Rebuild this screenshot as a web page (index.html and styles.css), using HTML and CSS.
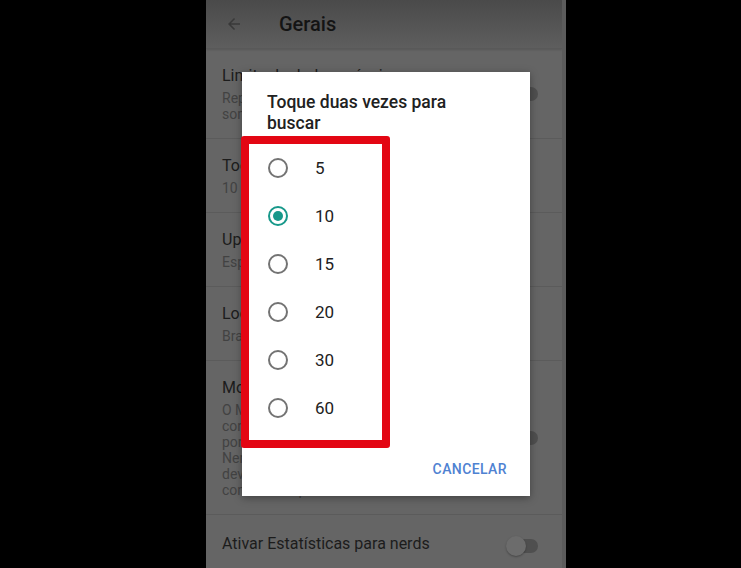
FILE: index.html
```html
<!DOCTYPE html>
<html>
  <head>
    <title>Gerais</title>
    <link rel="stylesheet" href="styles.css">
  </head>
  <body>
    <div class="screen">
      <div class="toolbar">
        <svg class="back" width="18" height="18" viewBox="0 0 24 24">
          <path d="M20 11H7.83l5.59-5.59L12 4l-8 8 8 8 1.41-1.41L7.83 13H20v-2z" fill="#333"/>
        </svg>
        <div class="toolbar-title">Gerais</div>
      </div>

      <div class="setting">
        <div class="setting-text">
          <div class="setting-title">Limite de dados móveis</div>
          <div class="setting-sub">Reproduzir vídeos em HD</div>
          <div class="setting-sub">somente em Wi-Fi</div>
        </div>
        <div class="toggle"><span class="thumb"></span></div>
      </div>
      <div class="setting">
        <div class="setting-text">
          <div class="setting-title">Tocar duas vezes para buscar</div>
          <div class="setting-sub">10 segundos</div>
        </div>
      </div>
      <div class="setting">
        <div class="setting-text">
          <div class="setting-title">Upload</div>
          <div class="setting-sub">Especificar preferências de rede</div>
        </div>
      </div>
      <div class="setting">
        <div class="setting-text">
          <div class="setting-title">Local</div>
          <div class="setting-sub">Brasil</div>
        </div>
      </div>
      <div class="setting">
        <div class="setting-text">
          <div class="setting-title">Modo restrito</div>
          <div class="setting-sub">O Modo restrito ajuda a ocultar</div>
          <div class="setting-sub">conteúdo potencialmente adulto</div>
          <div class="setting-sub">por meio de filtros.</div>
          <div class="setting-sub">Nenhum filtro é 100% preciso e</div>
          <div class="setting-sub">deve ser ativado em cada</div>
          <div class="setting-sub">conta ou dispositivo.</div>
        </div>
        <div class="toggle"><span class="thumb"></span></div>
      </div>
      <div class="setting single">
        <div class="setting-text">
          <div class="setting-title">Ativar Estatísticas para nerds</div>
        </div>
        <div class="toggle"><span class="thumb"></span></div>
      </div>

      <div class="dialog">
        <div class="dialog-title">Toque duas vezes para buscar</div>
        <div class="options">
          <div class="option"><span class="radio"></span><span class="label">5</span></div>
          <div class="option"><span class="radio checked"></span><span class="label">10</span></div>
          <div class="option"><span class="radio"></span><span class="label">15</span></div>
          <div class="option"><span class="radio"></span><span class="label">20</span></div>
          <div class="option"><span class="radio"></span><span class="label">30</span></div>
          <div class="option"><span class="radio"></span><span class="label">60</span></div>
        </div>
        <div class="dialog-actions">
          <span class="button">Cancelar</span>
        </div>
      </div>
    </div>
  </body>
</html>
```

FILE: styles.css
```css
body {
  margin: 0;
  background: #000000;
  font-family: Roboto, "Noto Sans", sans-serif;
  width: 741px;
  height: 568px;
  overflow: hidden;
}

.screen {
  position: relative;
  margin-left: 206px;
  width: 356px;
  height: 568px;
  background-color: #656565;
  border-right: 4px solid #5c5c5c;
  overflow: hidden;
}

.toolbar {
  display: flex;
  align-items: center;
  height: 48px;
  background: linear-gradient(to bottom, #4a4a4a, #5e5e5e);
  border-bottom: 1px solid #595959;
  box-shadow: 0 1px 2px rgba(0, 0, 0, 0.15);
}

.back {
  margin-left: 19px;
  opacity: 0.8;
}

.toolbar-title {
  margin-left: 36px;
  font-size: 20px;
  font-weight: 500;
  color: #141414;
}

.setting {
  display: flex;
  align-items: center;
  padding: 17px 24px 16px 16px;
  border-bottom: 1px solid #5b5b5b;
}

.setting-text {
  flex: 1;
}

.setting-title {
  font-size: 16px;
  line-height: 20px;
  color: #1c1c1c;
  margin-bottom: 4px;
}

.setting-sub {
  font-size: 14px;
  line-height: 16px;
  color: #424242;
}

.single {
  padding-top: 19px;
  padding-bottom: 15px;
}

.toggle {
  position: relative;
  width: 28px;
  height: 14px;
  border-radius: 7px;
  background-color: #4f4f4f;
}

.thumb {
  position: absolute;
  left: -4px;
  top: -3px;
  width: 20px;
  height: 20px;
  border-radius: 50%;
  background-color: #6c6c6c;
  box-shadow: 0 1px 2px rgba(0, 0, 0, 0.3);
}

.dialog {
  position: absolute;
  left: 36px;
  top: 72px;
  width: 288px;
  height: 424px;
  box-sizing: border-box;
  background-color: #ffffff;
  box-shadow: 0 2px 8px rgba(0, 0, 0, 0.35);
  padding-top: 20px;
  display: flex;
  flex-direction: column;
}

.dialog-title {
  padding: 0 0 0 25px;
  width: 200px;
  font-size: 17.5px;
  line-height: 21px;
  font-weight: 500;
  color: #212121;
}

.options {
  margin-top: 2px;
  margin-left: -1px;
  width: 133px;
  border: 8px solid #e30613;
  border-radius: 3px;
  padding-bottom: 8px;
}

.option {
  display: flex;
  align-items: center;
  height: 48px;
  padding-left: 19px;
}

.radio {
  width: 16px;
  height: 16px;
  border: 2px solid #737373;
  border-radius: 50%;
  box-sizing: content-box;
  position: relative;
}

.radio.checked {
  border-color: #17988a;
}

.radio.checked::after {
  content: "";
  position: absolute;
  left: 3px;
  top: 3px;
  width: 10px;
  height: 10px;
  border-radius: 50%;
  background-color: #17988a;
}

.label {
  margin-left: 27px;
  font-size: 17px;
  color: #212121;
}

.dialog-actions {
  display: flex;
  justify-content: flex-end;
  padding: 0 23px 0 0;
  margin-top: 3px;
  height: 36px;
  align-items: center;
}

.button {
  font-size: 14px;
  font-weight: 500;
  letter-spacing: 0.4px;
  text-transform: uppercase;
  color: #4f82d2;
}
```
